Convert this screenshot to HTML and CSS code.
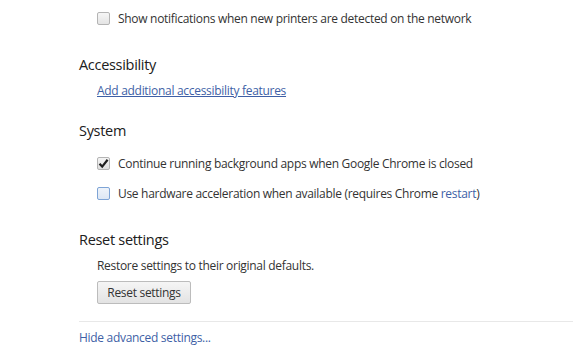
FILE: index.html
```html
<!DOCTYPE html>
<html lang="en">
<head>
  <meta charset="UTF-8" />
  <title>Settings - Advanced</title>
  <link rel="stylesheet" href="styles.css">
</head>
<body>
  <div class="settings">

    <div class="row first-row">
      <span class="box"></span>
      <span>Show notifications when new printers are detected on the network</span>
    </div>

    <!-- Accessibility -->
    <h3 class="section-title access-title">Accessibility</h3>
    <div class="section-body">
      <a class="link" href="#">Add additional accessibility features</a>
    </div>

    <!-- System -->
    <h3 class="section-title system-title">System</h3>
    <div class="section-body rows">
      <div class="row">
        <span class="box checked">
          <svg width="11" height="11" viewBox="0 0 11 11"><path d="M1.5 5.8 L4.2 8.6 L9.6 1.8" fill="none" stroke="#1e1e1e" stroke-width="2.2"/></svg>
        </span>
        <span>Continue running background apps when Google Chrome is closed</span>
      </div>
      <div class="row">
        <span class="box focused"></span>
        <span>Use hardware acceleration when available (requires Chrome <a class="plain-link" href="#">restart</a>)</span>
      </div>
    </div>

    <!-- Reset -->
    <h3 class="section-title reset-title">Reset settings</h3>
    <div class="section-body">
      <div class="note">Restore settings to their original defaults.</div>
      <button class="btn">Reset settings</button>
    </div>

    <div class="footer">
      <a class="plain-link" href="#">Hide advanced settings...</a>
    </div>
  </div>
</body>
</html>
```

FILE: styles.css
```css
body {
  margin: 0;
  background: #fff;
  font-family: 'Open Sans', 'Noto Sans', sans-serif;
  font-size: 12px;
  letter-spacing: -0.3px;
  color: #333;
}

.settings {
  padding-left: 79px;
}

.row {
  display: flex;
  align-items: center;
  height: 20px;
  padding-left: 18px;
}

.first-row {
  margin-top: 8px;
}

.rows .row {
  padding-left: 0;
}

.rows .row + .row {
  margin-top: 10px;
}

.box {
  width: 11px;
  height: 11px;
  border: 1px solid #b4b4b4;
  border-radius: 2px;
  background: linear-gradient(#f6f6f6, #e4e4e4);
  margin-right: 8px;
  display: flex;
  align-items: center;
  justify-content: center;
  flex-shrink: 0;
}

.box.checked {
  background: linear-gradient(#f4f4f4, #dedede);
}

.box.focused {
  border-color: #7ea4d6;
  background: linear-gradient(#eef3fa, #dde7f4);
}

.section-title {
  margin: 0;
  font-size: 14.5px;
  font-weight: normal;
  line-height: 20px;
  color: #202020;
}

.access-title { margin-top: 27px; }
.system-title { margin-top: 20px; }
.reset-title { margin-top: 27px; }

.section-body {
  padding-left: 18px;
  margin-top: 6px;
}

.system-title + .section-body {
  margin-top: 12px;
}

.link {
  display: block;
  line-height: 20px;
  margin-top: 1px;
  color: #3e5fa6;
  text-decoration: underline;
}

.plain-link {
  color: #3e5fa6;
  text-decoration: none;
}

.note {
  line-height: 20px;
  margin-top: 1px;
}

.btn {
  margin-top: 5px;
  width: 94px;
  height: 23px;
  padding: 0;
  font-family: inherit;
  font-size: 12px;
  letter-spacing: -0.3px;
  color: #333;
  border: 1px solid #bcbcbc;
  border-radius: 2px;
  background: linear-gradient(#f5f5f5, #e3e3e3);
}

.footer {
  margin-top: 17px;
  border-top: 1px solid #e8e8e8;
  padding-top: 6px;
  line-height: 20px;
}
```
